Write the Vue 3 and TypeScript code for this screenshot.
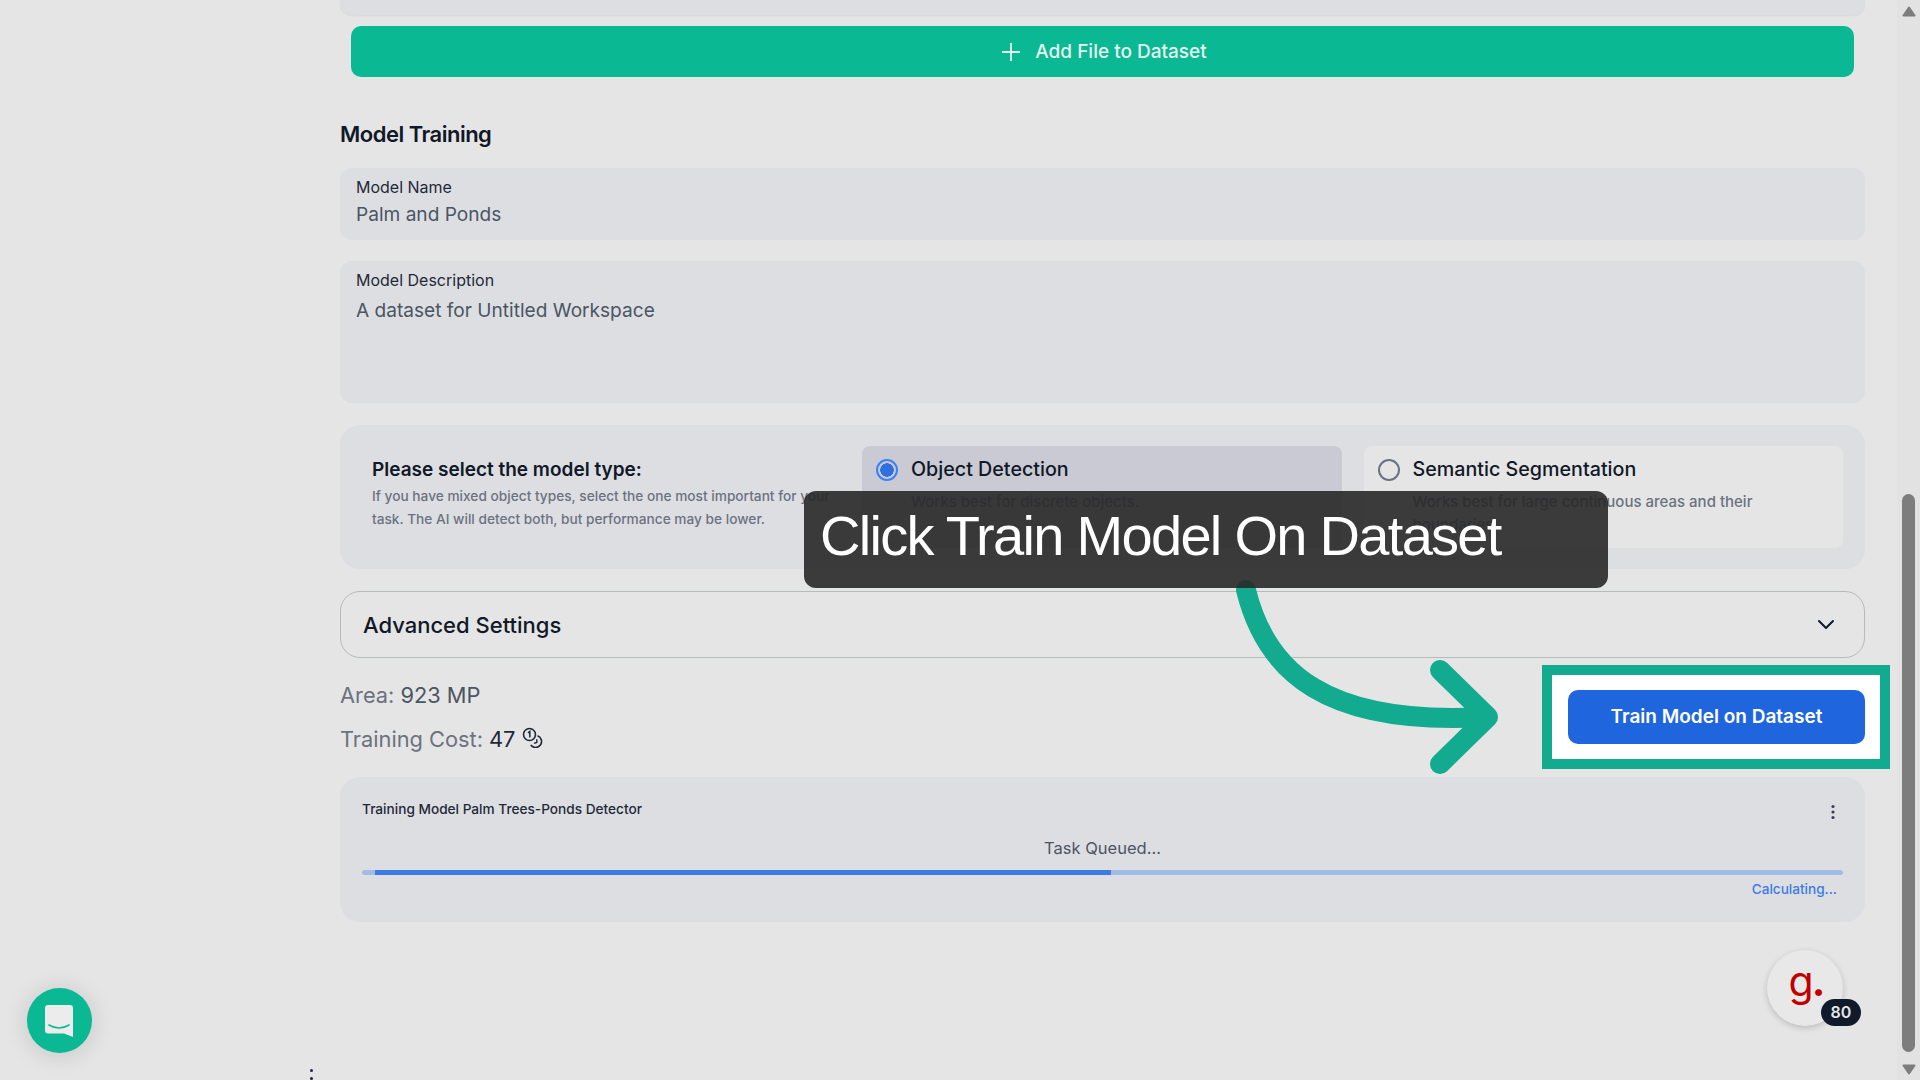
<script setup lang="ts">
const OPTIONS = [
  { id: 'object', label: 'Object Detection', desc: 'Works best for discrete objects.', active: true },
  { id: 'semantic', label: 'Semantic Segmentation', desc: 'Works best for large continuous areas and their boundaries.', active: false },
];

const progress = { start: 0.88, width: 49.7 };
</script>

<template>
  <div class="page">
    <main class="main">
      <div class="top-card"></div>
      <button class="add-btn">
        <svg width="20" height="20" viewBox="0 0 20 20" fill="none">
          <path d="M10 1v18M1 10h18" stroke="#e6f3ef" stroke-width="1.8"/>
        </svg>
        <span>Add File to Dataset</span>
      </button>

      <h2 class="heading">Model Training</h2>

      <div class="field name-field">
        <label>Model Name</label>
        <div class="value">Palm and Ponds</div>
      </div>
      <div class="field desc-field">
        <label>Model Description</label>
        <div class="value">A dataset for Untitled Workspace</div>
      </div>

      <section class="type-card">
        <div class="type-intro">
          <h3>Please select the model type:</h3>
          <p>If you have mixed object types, select the one most important for your task. The AI will detect both, but performance may be lower.</p>
        </div>
        <div
          v-for="opt in OPTIONS" :key="opt.id"
          class="option"
          :class="{ active: opt.active }"
        >
          <div class="option-head">
            <span class="radio"></span>
            <span class="option-label">{{ opt.label }}</span>
          </div>
          <p>{{ opt.desc }}</p>
        </div>
      </section>

      <div class="advanced">
        <span>Advanced Settings</span>
        <svg width="18" height="11" viewBox="0 0 18 11" fill="none">
          <path d="M2 2l7 7 7-7" stroke="#111827" stroke-width="2" stroke-linecap="round" stroke-linejoin="round"/>
        </svg>
      </div>

      <div class="train-row">
        <div class="stats">
          <div>Area: <span class="area">923 MP</span></div>
          <div class="cost">
            Training Cost: <span class="num">47</span>
            <svg class="coins" width="21" height="21" viewBox="0 0 21 21" fill="none">
              <circle cx="7.5" cy="7.5" r="6" stroke="#1f2937" stroke-width="1.6"/>
              <path d="M6 5.8l1.8-1.3v6" stroke="#1f2937" stroke-width="1.5"/>
              <path d="M15.5 8.8a6 6 0 1 1-6.8 9.2" stroke="#1f2937" stroke-width="1.6"/>
              <path d="M14.8 12.2v3.2l-2.8 1" stroke="#1f2937" stroke-width="1.4"/>
            </svg>
          </div>
        </div>
        <div class="spot">
          <button class="train-btn">Train Model on Dataset</button>
        </div>
      </div>

      <section class="progress-card">
        <div class="progress-head">
          <span class="progress-title">Training Model Palm Trees-Ponds Detector</span>
          <svg width="4" height="16" viewBox="0 0 4 16">
            <circle cx="2" cy="2.5" r="1.6" fill="#374151"/>
            <circle cx="2" cy="8" r="1.6" fill="#374151"/>
            <circle cx="2" cy="13.5" r="1.6" fill="#374151"/>
          </svg>
        </div>
        <div class="task">Task Queued...</div>
        <div class="track">
          <div class="fill" :style="{ marginLeft: progress.start + '%', width: progress.width + '%' }"></div>
        </div>
        <div class="calc">Calculating...</div>
      </section>
    </main>

    <aside class="scrollbar">
      <svg class="arrow-up" width="14" height="11" viewBox="0 0 14 11">
        <path d="M7 1.5L12.5 9.5H1.5z" fill="#7d7d7d" stroke="#7d7d7d" stroke-width="2" stroke-linejoin="round"/>
      </svg>
      <div class="thumb"></div>
      <svg class="arrow-down" width="14" height="11" viewBox="0 0 14 11">
        <path d="M7 9.5L12.5 1.5H1.5z" fill="#7d7d7d" stroke="#7d7d7d" stroke-width="2" stroke-linejoin="round"/>
      </svg>
    </aside>

    <svg class="arrow" width="290" height="200" viewBox="0 0 290 200" fill="none">
      <path d="M16 10C36 92 96 146 255 137" stroke="#12ab8f" stroke-width="20" stroke-linecap="round"/>
      <path d="M210 90L258 137L210 184" stroke="#12ab8f" stroke-width="20" stroke-linecap="round" stroke-linejoin="round"/>
    </svg>

    <div class="callout">Click Train Model On Dataset</div>

    <button class="chat">
      <svg width="28" height="32" viewBox="0 0 28 32">
        <path d="M3 0H25a3 3 0 0 1 3 3V32L19 28.500H3a3 3 0 0 1-3-3V3a3 3 0 0 1 3-3z" fill="#ececec"/>
        <path d="M4 20Q14 26 24 20" stroke="#0ab894" stroke-width="1.6" fill="none" stroke-linecap="round"/>
      </svg>
    </button>

    <div class="grammarly">
      <span class="g">g<i>.</i></span>
      <span class="count">80</span>
    </div>

    <div class="stray-dots"></div>
  </div>
</template>

<style>
html, body { margin: 0; background: #e5e5e5; }
</style>

<style scoped>
.page {
  display: flex; width: 1920px; height: 1080px; overflow: hidden; position: relative;
  background: #e5e5e5; font-family: Inter, 'Noto Sans', sans-serif; color: #111827;
}
.main { flex: 1; padding: 0 32px 0 340px; min-width: 0; }
button { font-family: inherit; border: none; cursor: pointer; }
p, h2, h3 { margin: 0; }

.top-card {
  height: 15px; margin-bottom: 11px; background: #dddee2;
  border-radius: 0 0 12px 12px; box-shadow: 0 1px 2px rgba(0, 0, 0, .06);
}
.add-btn {
  display: flex; align-items: center; justify-content: center; gap: 14px;
  width: 1503px; height: 51px; margin-left: 11px; border-radius: 10px; padding: 0 0 0 3px;
  background: #0ab894; color: #e6f3ef; font-size: 19px; font-weight: 500;
}

.heading { margin: 43px 0 20px; font-size: 22px; line-height: 28px; font-weight: 600; letter-spacing: -.5px; }

.field { background: #dddee2; border-radius: 12px; padding: 9px 16px 0; box-sizing: border-box; }
.field label { display: block; font-size: 16px; line-height: 20px; color: #1f2937; }
.field .value { font-size: 19.100px; color: #4b5563; }
.name-field { height: 72px; }
.name-field .value { margin-top: 5px; line-height: 24px; }
.desc-field { height: 142px; margin-top: 21px; }
.desc-field .value { margin-top: 8px; line-height: 24px; }

.type-card {
  display: flex; gap: 22px; height: 144px; margin-top: 22px; box-sizing: border-box;
  padding: 21px 22px; background: #dddee2; border-radius: 20px;
}
.type-intro { flex: none; width: 478px; padding: 12px 0 0 10px; box-sizing: border-box; }
.type-intro h3 { font-size: 19px; line-height: 24px; font-weight: 600; }
.type-intro p {
  margin-top: 3px; max-width: 468px; font-size: 13.700px; line-height: 23px; font-weight: 500; color: #6b7280;
}
.option { flex: 1; height: 102px; padding: 11px 16px 0 14px; box-sizing: border-box; background: #e5e5e5; border-radius: 8px; }
.option.active { background: #c9cad3; }
.option-head { display: flex; align-items: center; gap: 13px; height: 24px; }
.radio {
  flex: none; width: 22px; height: 22px; box-sizing: border-box; border-radius: 50%;
  border: 2px solid #6b7280; background: transparent;
  margin-top: 1px;
}
.option.active .radio {
  border-color: #3b82f6;
  background: radial-gradient(circle, #2f6fe0 0 6.500px, transparent 7px);
}
.option-label { font-size: 19.700px; font-weight: 500; color: #111827; }
.option p {
  margin: 9px 0 0 35px; max-width: 400px; font-size: 15px; line-height: 23px; font-weight: 500; color: #6b7280;
}

.advanced {
  display: flex; align-items: center; justify-content: space-between;
  height: 67px; margin-top: 22px; box-sizing: border-box; padding: 0 29px 0 22px;
  border: 1px solid #b4bbbb; border-radius: 20px;
  font-size: 22px; font-weight: 500; color: #111827;
}

.train-row { display: flex; justify-content: space-between; margin: 7px -25px 0 0; }
.stats { padding-top: 16px; font-size: 21.800px; line-height: 28px; color: #6b7280; }
.area { color: #4b5563; }
.cost { margin-top: 16px; display: flex; align-items: center; gap: 6px; }
.num { color: #1f2937; }
.coins { margin: -3px 0 0 1px; }

.spot {
  box-sizing: border-box; width: 348px; height: 104px;
  padding: 15px 16px 0 16px; background: #fff; border: 10px solid #12ab8f;
}
.train-btn {
  display: block; width: 297px; height: 54px; padding-bottom: 2px; border-radius: 10px;
  background: #1f65de; color: #fff; font-size: 19px; font-weight: 600;
}

.progress-card {
  height: 145px; margin-top: 8px; box-sizing: border-box; padding: 24px 22px 0;
  background: #dddee2; border-radius: 20px; position: relative;
}
.progress-head { display: flex; justify-content: space-between; align-items: flex-start; }
.progress-title { font-size: 13.650px; line-height: 17px; font-weight: 500; color: #1f2937; }
.progress-head svg { margin: 3px 8px 0 0; }
.task { margin-top: 17px; text-align: center; font-size: 16.500px; line-height: 22px; color: #4b5563; }
.track { height: 5px; margin-top: 11px; border-radius: 3px; background: #a2bce8; }
.fill { height: 5px; background: #3b7be4; }
.calc { margin: 5px 6px 0 0; text-align: right; font-size: 13.600px; line-height: 18px; font-weight: 500; color: #3b7be6; }

.scrollbar {
  position: relative; display: flex; flex-direction: column; align-items: center;
  width: 23px; height: 1080px; background: #e2e2e2;
}
.arrow-up { margin-top: 6px; }
.thumb { width: 13px; height: 558px; margin-top: auto; border-radius: 7px; background: #7d7d7d; }
.arrow-down { margin: 12px 0 5px; }

.arrow { position: absolute; left: 1230px; top: 580px; }
.callout {
  position: absolute; left: 804px; top: 491px; width: 804px; height: 97px;
  box-sizing: border-box; padding: 12px 0 0 16px; border-radius: 12px;
  background: rgba(40, 40, 40, .9); color: #fff;
  font-family: 'Liberation Sans', Arial, sans-serif; font-size: 56px; line-height: 66px; letter-spacing: -1.700px;
}

.chat {
  position: absolute; left: 27px; top: 988px; width: 65px; height: 65px; padding: 0 2px 0 0;
  display: flex; align-items: center; justify-content: center; border-radius: 50%;
  background: #0ab894; box-shadow: 0 2px 24px rgba(0, 0, 0, .14);
}
.grammarly {
  position: absolute; left: 1767px; top: 950px; width: 76px; height: 76px; border-radius: 50%;
  background: #e8e8e8; box-shadow: 0 2px 6px rgba(0, 0, 0, .18);
  display: flex; align-items: center; justify-content: center;
}
.g { margin: -14px 0 0 4px; font-size: 41px; line-height: 1; color: #c00000; }
.g i { font-style: normal; font-weight: 700; margin-left: -2px; }
.count {
  position: absolute; left: 54px; top: 49px; width: 40px; height: 27px; border-radius: 14px;
  background: #0f1a2b; color: #e5e5e5; font-size: 16px; font-weight: 600; line-height: 27px; text-align: center;
}
.stray-dots {
  position: absolute; left: 310px; top: 1069px; width: 3px; height: 3px; border-radius: 50%;
  background: #1f2937; box-shadow: 0 8px 0 #1f2937;
}
</style>
